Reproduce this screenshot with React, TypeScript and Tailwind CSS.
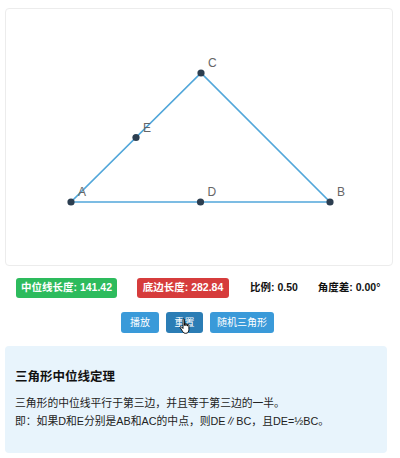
import React from "react";

const font = { fontFamily: '"Liberation Sans", Arial, "Noto Sans CJK SC", sans-serif' };

/* ---------- Triangle canvas ---------- */
const A = { x: 65, y: 193 };
const B = { x: 324, y: 193 };
const C = { x: 195, y: 64 };
const D = { x: (A.x + B.x) / 2, y: (A.y + B.y) / 2 };
const E = { x: (A.x + C.x) / 2, y: (A.y + C.y) / 2 };

const points: { name: string; p: { x: number; y: number } }[] = [
  { name: "A", p: A },
  { name: "B", p: B },
  { name: "C", p: C },
  { name: "D", p: D },
  { name: "E", p: E },
];

function TriangleCanvas() {
  return (
    <div className="h-[258px] w-[388px] rounded-[4px] border border-[#ececec] bg-white">
      <svg width="386" height="256" viewBox="0 0 386 256">
        <polygon
          points={`${A.x},${A.y} ${B.x},${B.y} ${C.x},${C.y}`}
          fill="none"
          stroke="#52a7da"
          strokeWidth="1.6"
        />
        {points.map(({ name, p }) => (
          <g key={name}>
            <circle cx={p.x} cy={p.y} r="3.6" fill="#2c3e50" />
            <text
              x={p.x + 7}
              y={p.y - 6}
              fontSize="12"
              fill="#666"
              fontFamily='"Liberation Sans", Arial, sans-serif'
            >
              {name}
            </text>
          </g>
        ))}
      </svg>
    </div>
  );
}

/* ---------- Hand cursor ---------- */
function HandCursor() {
  return (
    <svg
      className="pointer-events-none absolute left-[13px] top-[6px]"
      width="14"
      height="17"
      viewBox="0 0 14 17"
    >
      <path
        d="M4 1.5c0-.8 1.4-.8 1.4 0v6l.1-1.6c0-.8 1.4-.8 1.4 0v1.8l.1-1.2c0-.8 1.4-.8 1.4 0v1.6l.1-.9c0-.8 1.4-.8 1.4 0v4.3c0 2-1 3.8-3 3.8H6.2c-1 0-1.8-.6-2.3-1.4L1.2 9.6c-.4-.7.5-1.4 1.1-.8L4 10.5z"
        fill="#fff"
        stroke="#000"
        strokeWidth="0.9"
        strokeLinejoin="round"
      />
    </svg>
  );
}

/* ---------- Main ---------- */
export default function App() {
  return (
    <div className="w-[400px] h-[458px] bg-white px-[5px] pt-[8px] overflow-hidden" style={font}>
      <TriangleCanvas />

      {/* Stats */}
      <div className="mt-[12px] flex items-center pl-[11px] text-[10.5px] font-bold">
        <span className="flex h-[20px] w-[101px] items-center justify-center rounded-[3px] bg-[#2dbb5d] text-white">
          中位线长度: 141.42
        </span>
        <span className="ml-[20px] flex h-[20px] w-[92px] items-center justify-center rounded-[3px] bg-[#d63c3c] text-white">
          底边长度: 282.84
        </span>
        <span className="ml-[21px] text-[#111]">比例: 0.50</span>
        <span className="ml-[20px] text-[#111]">角度差: 0.00°</span>
      </div>

      {/* Controls */}
      <div className="mt-[14px] flex justify-center gap-[7px] pr-[5px] text-[10px] text-white">
        <button className="h-[21px] w-[38px] rounded-[3px] bg-[#3a9ad9]">播放</button>
        <button className="relative h-[21px] w-[37px] rounded-[3px] bg-[#2b7db5]">
          重置
          <HandCursor />
        </button>
        <button className="h-[21px] w-[64px] rounded-[3px] bg-[#3a9ad9]">随机三角形</button>
      </div>

      {/* Theorem */}
      <div className="mt-[13px] h-[107px] w-[382px] rounded-[4px] bg-[#e8f4fc] pl-[10px] pt-[22px]">
        <h3 className="text-[12.5px] font-bold leading-[18px] text-[#111]">三角形中位线定理</h3>
        <p className="mt-[9px] text-[10.8px] leading-[16px] text-[#222]">
          三角形的中位线平行于第三边，并且等于第三边的一半。
        </p>
        <p className="mt-[2px] text-[10.8px] leading-[16px] text-[#222]">
          即：如果D和E分别是AB和AC的中点，则DE∥BC，且DE=½BC。
        </p>
      </div>
    </div>
  );
}
